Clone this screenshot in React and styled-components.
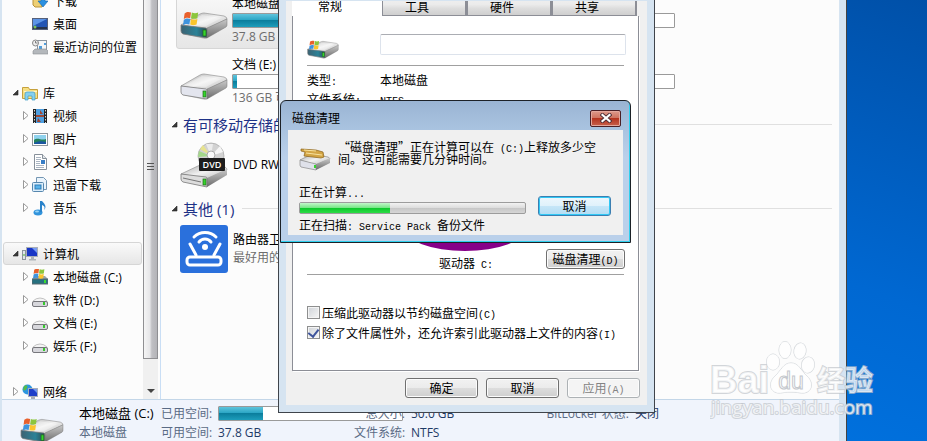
import styled, { createGlobalStyle, css } from "styled-components";

const shellFont = `"Open Sans", "Noto Sans CJK SC", sans-serif`;
const dialogFont = `"Noto Sans CJK SC", sans-serif`;

const Flag = props => (
  <g {...props}>
    <path d="M2 3c3-2 5-2 8-1L9 9C6 8 4 8 1 10z" fill="#e8602c" />
    <path d="M11 2c3 1 5 1 8 0l-1 7c-3 1-5 1-8 0z" fill="#8cc63c" />
    <path d="M1 11c3-2 5-2 8-1l-1 7c-3-1-5-1-8 1z" fill="#3f93dd" />
    <path d="M10 10c3 1 5 1 8 0l-1 7c-3 1-5 1-8 0z" fill="#fbc52c" />
  </g>
);

const DriveIcon = ({ width = 48, height = 34, system }) => (
  <svg width={width} height={height} viewBox="0 0 48 34" aria-hidden="true">
    <defs>
      <linearGradient id="driveTop" x1="0" y1="0" x2="1" y2="1">
        <stop offset="0" stopColor="#a9a9a9" />
        <stop offset="0.5" stopColor="#f1f1f1" />
        <stop offset="1" stopColor="#b5b5b5" />
      </linearGradient>
      <linearGradient id="driveSide" x1="0" y1="0" x2="0" y2="1">
        <stop offset="0" stopColor="#c9c9c9" />
        <stop offset="1" stopColor="#6c6c6c" />
      </linearGradient>
      <linearGradient id="driveFront" x1="0" y1="0" x2="1" y2="0">
        <stop offset="0" stopColor="#3d6272" />
        <stop offset="0.6" stopColor="#2b8297" />
        <stop offset="1" stopColor="#2c4a50" />
      </linearGradient>
    </defs>
    <path d="M3 28l22 5 22-14-2-2-22 12z" fill="#000" opacity="0.2" />
    <path d="M1 19L20 8q2-1 4-1l20 3q3 1 3 3L27 23z" fill="url(#driveTop)" stroke="#959595" strokeWidth="0.7" />
    <path d="M6 18L22 9l19 3-15 8z" fill="#fff" opacity="0.35" />
    <path d="M27 22l20-9v6q0 1-1 2L27 32z" fill="url(#driveSide)" stroke="#777" strokeWidth="0.5" />
    <path
      d="M1 19l25 3q1 0 1 2v8L3 28q-2-1-2-3z"
      fill={system ? "url(#driveFront)" : "#e3e5ee"}
      stroke="#7c7c7c"
      strokeWidth="0.8"
    />
    <rect x="23" y="24" width="3" height="6" fill="#35d52c" stroke="#226a1b" strokeWidth="0.7" />
    {system && <Flag transform="translate(3 5) scale(0.8)" />}
  </svg>
);

const DvdIcon = () => (
  <svg width="48" height="48" viewBox="0 0 48 48" aria-hidden="true">
    <circle cx="31" cy="15" r="13" fill="#d2d2d2" stroke="#a5a5a5" strokeWidth="0.7" />
    <path d="M31 15L19 10l-1 6z" fill="#a4d88a" />
    <path d="M31 15L20 8l3-4z" fill="#e7e38e" />
    <path d="M31 15L40 5l3 6z" fill="#f6f6f6" />
    <path d="M31 15L26 3h7z" fill="#ececec" />
    <circle cx="31" cy="14" r="4" fill="#fafafa" stroke="#aaa" />
    <path d="M1 33l19-9 25 2q2 1 2 3L27 38z" fill="url(#driveTop)" stroke="#959595" strokeWidth="0.7" />
    <path d="M27 37l20-9v6L27 46z" fill="url(#driveSide)" />
    <path d="M1 33l25 3q1 0 1 2v8L3 41q-2-1-2-3z" fill="#ddd" stroke="#777" strokeWidth="0.8" />
    <path d="M3 37l18 4" stroke="#777" />
    <rect x="23" y="38" width="3" height="6" fill="#35d52c" stroke="#226a1b" strokeWidth="0.7" />
    <rect x="19" y="17" width="26" height="13" rx="1" fill="#1d1d1d" />
    <text x="32" y="27" fontFamily="Open Sans" fontSize="9" fontWeight="600" fill="#fff" textAnchor="middle">
      DVD
    </text>
  </svg>
);

const RouterIcon = () => (
  <svg width="48" height="48" viewBox="0 0 48 48" aria-hidden="true">
    <rect width="48" height="48" rx="3" fill="#2a70dc" />
    <g fill="none" stroke="#fff" strokeWidth="3" strokeLinecap="round">
      <rect x="7" y="32" width="34" height="8" rx="3" />
      <path d="M10 19l6 11M40 19l-6 11" />
      <path d="M14 12c6-6 16-6 22 0M19 17c3-4 9-4 12 0" />
    </g>
    <circle cx="25" cy="22" r="3" fill="#fff" />
  </svg>
);

const CleanupIcon = () => (
  <svg width="32" height="24" viewBox="0 0 32 24" aria-hidden="true">
    <path d="M1 13l12-6 16 3q2 1 2 2L17 18z" fill="url(#driveTop)" stroke="#8a8a8a" strokeWidth="0.7" />
    <path d="M17 17l14-6v5L17 23z" fill="url(#driveSide)" />
    <path d="M1 13l16 4v6L2 20q-1-1-1-2z" fill="#dfe1ea" stroke="#888" strokeWidth="0.7" />
    <rect x="15" y="18" width="2" height="3" fill="#35d52c" />
    <path d="M2 2l15 1 7 2 1 5-3 1-17-2 1-4-4-1z" fill="#d3a544" stroke="#8a6118" strokeWidth="0.7" />
    <path d="M7 6l16 2M5 3l12 1" stroke="#f8e3a0" />
  </svg>
);

const smallIcons = {
  download: (
    <>
      <path d="M1 0h9v14H3l-2-2z" fill="#edcf74" stroke="#b8923a" />
      <path d="M9 3h4v5h3l-5 6-5-6h3z" fill="#2b90e0" stroke="#1666ad" strokeWidth="0.6" />
    </>
  ),
  desktop: (
    <>
      <rect x="0.5" y="2.5" width="15" height="11" fill="#2355b4" stroke="#56617a" />
      <path d="M1 3h14L1 10z" fill="#5c94e6" />
      <path d="M1 11h14v2H1z" fill="#27344c" />
      <circle cx="3" cy="11" r="1.5" fill="#7ac25a" />
    </>
  ),
  recent: (
    <>
      <rect x="5.5" y="1.5" width="9" height="10" fill="#f4f6f8" stroke="#8a949e" />
      <path d="M7 7h3v3H7zM12 4h2v2h-2z" fill="#4f9ddb" />
      <path d="M1 12l2-2h11l2 2v3H1z" fill="#b4b8bc" stroke="#898d92" strokeWidth="0.6" />
      <circle cx="3.5" cy="4" r="3" fill="#eee" stroke="#888" />
      <path d="M3.5 2v2h2" fill="none" stroke="#555" strokeWidth="0.7" />
    </>
  ),
  library: (
    <>
      <path d="M0.5 2.5h6l1 2h8v9H0.5z" fill="#f6df83" stroke="#c6a13c" />
      <path d="M2 6h13v1H2z" fill="#fff5c4" />
      <path d="M3 15V9q0-2 2-2h6q2 0 2 2v6h-3v-4H6v4z" fill="#85d0ef" stroke="#3f9dc5" strokeWidth="0.7" />
    </>
  ),
  video: (
    <>
      <rect x="1" y="1" width="14" height="14" fill="#232323" />
      <rect x="4" y="1" width="8" height="14" fill="#4e9fe0" />
      <path d="M4 7h8v2H4zM8 2l3 4H8zM6 10l3 4H5z" fill="#9e4632" />
      <path d="M2.5 2v13M13.5 2v13" stroke="#d6d6d6" strokeDasharray="1.5 1.5" />
    </>
  ),
  picture: (
    <>
      <rect x="0.5" y="2.5" width="15" height="12" fill="#fff" stroke="#8e969d" />
      <rect x="2" y="4" width="12" height="9" fill="#8fd2ee" />
      <path d="M2 9c4-3 7 1 12-1v5H2z" fill="#25815c" />
      <path d="M2 12c4-2 8-2 12-1v2H2z" fill="#1b56a0" />
    </>
  ),
  document: (
    <>
      <path d="M2.5 0.5h8l4 4v11h-12z" fill="#fff" stroke="#87909a" />
      <path d="M10.5 0.5v4h4" fill="#e2e6ea" stroke="#87909a" />
      <path d="M4 3.5h5M4 5.5h5M4 7.5h4M4 9.5h4M4 11.5h8M4 13.5h8" stroke="#aab5c2" />
      <path d="M9 6h4v4H9z" fill="#387ec6" />
    </>
  ),
  files: (
    <>
      <path d="M4.5 0.5h7l3 3v9h-10z" fill="#eaf4fc" stroke="#7496b3" />
      <rect x="0.5" y="5.5" width="11" height="9" rx="1" fill="#dceefb" stroke="#5687ae" />
      <rect x="3" y="8" width="6" height="4" fill="#58b3ea" stroke="#2e7cb7" />
    </>
  ),
  music: (
    <>
      <ellipse cx="6" cy="12.500" rx="4.500" ry="3" fill="#3294dc" />
      <path d="M8 1v11h2V5c3 1 3 3 2 5 3-3 1-6-2-9z" fill="#2a83ca" />
      <ellipse cx="5" cy="11.500" rx="2" ry="1" fill="#96d2f6" />
    </>
  ),
  computer: (
    <>
      <rect x="0.5" y="4.5" width="3" height="9" fill="#dfe5ea" stroke="#8c949b" />
      <path d="M1 9h2" stroke="#4ab52d" />
      <rect x="4.5" y="1.5" width="11" height="9" fill="#1936c6" stroke="#a8aeb8" />
      <path d="M10 2h5v5z" fill="#779bf3" />
      <path d="M9 11h3v2h2v1.5H7V13h2z" fill="#aeb4ba" />
    </>
  ),
  system: (
    <>
      <path d="M0 10l3-3h10l3 3v5H0z" fill="#9ca6aa" />
      <path d="M0 10h16v5H0z" fill="#27717f" stroke="#5b6b70" />
      <rect x="12" y="11" width="2" height="3" fill="#3bdc31" />
      <Flag transform="translate(1 -1) scale(0.6)" />
    </>
  ),
  drive: (
    <>
      <path d="M1 9q3-3 7-3t7 3v3H1z" fill="#f4f4f4" stroke="#aaa" strokeWidth="0.7" />
      <rect x="0.5" y="9.5" width="15" height="5" rx="1.500" fill="#d7d7dc" stroke="#77777c" />
      <rect x="11" y="10" width="2" height="3" fill="#35c92c" />
    </>
  ),
  network: (
    <>
      <circle cx="5.500" cy="5.500" r="5" fill="#2d95e0" />
      <path d="M2 2c3-2 4 0 3 2s-2 3-4 2zM6 6l4 1-3 3z" fill="#56bc4c" />
      <rect x="6.5" y="4.5" width="9" height="8" fill="#1d3fc9" stroke="#a6aeb9" />
      <path d="M11 5h4v4z" fill="#6f98ef" />
      <path d="M9 13h4v2H9z" fill="#a6aeb9" />
    </>
  ),
};

const SmallIcon = ({ name }) => (
  <svg width="16" height="16" viewBox="0 0 16 16" aria-hidden="true">
    {smallIcons[name]}
  </svg>
);

const Twisty = ({ open }) => (
  <svg width="7" height="9" viewBox="0 0 7 9" aria-hidden="true">
    {open ? (
      <path d="M6 2v5H1z" fill="#3a3a3a" stroke="#222" strokeWidth="0.6" />
    ) : (
      <path d="M1.5 0.5v8l4.500-4z" fill="#fff" stroke="#999" />
    )}
  </svg>
);

const tree = [
  [
    { label: "下载", icon: "download", leaf: true },
    { label: "桌面", icon: "desktop", leaf: true },
    { label: "最近访问的位置", icon: "recent", leaf: true },
  ],
  [
    { label: "库", icon: "library", root: true, open: true },
    { label: "视频", icon: "video" },
    { label: "图片", icon: "picture" },
    { label: "文档", icon: "document" },
    { label: "迅雷下载", icon: "files" },
    { label: "音乐", icon: "music" },
  ],
  [
    { label: "计算机", icon: "computer", root: true, open: true, selected: true },
    { label: "本地磁盘 (C:)", icon: "system" },
    { label: "软件 (D:)", icon: "drive" },
    { label: "文档 (E:)", icon: "drive" },
    { label: "娱乐 (F:)", icon: "drive" },
  ],
  [{ label: "网络", icon: "network", root: true }],
];

const drives = [
  { name: "本地磁盘 (C:)", free: "37.8 GB 可用,共 50.0 GB", used: 25, system: true, selected: true },
  { name: "软件 (D:)", free: "120 GB 可用,共 138 GB", used: 13 },
  { name: "文档 (E:)", free: "136 GB 可用,共 138 GB", used: 2 },
  { name: "娱乐 (F:)", free: "130 GB 可用,共 138 GB", used: 6 },
];

const Sidebar = () => (
  <StyledSidebar>
    <StyledTree>
      {tree.map((group, i) => (
        <StyledTreeGroup key={i}>
          {group.map(item => (
            <StyledTreeItem key={item.label} href="#" $root={item.root} $selected={item.selected}>
              <StyledTwisty>{!item.leaf && <Twisty open={item.open} />}</StyledTwisty>
              <SmallIcon name={item.icon} />
              <span>{item.label}</span>
            </StyledTreeItem>
          ))}
        </StyledTreeGroup>
      ))}
    </StyledTree>
    <StyledScrollbar>
      <StyledThumb>
        <i />
        <i />
        <i />
      </StyledThumb>
      <StyledScrollDown aria-label="向下滚动">
        <svg width="8" height="4" viewBox="0 0 8 4">
          <path d="M0 0h8L4 4z" fill="#444" />
        </svg>
      </StyledScrollDown>
    </StyledScrollbar>
  </StyledSidebar>
);

const SectionHeader = ({ children }) => (
  <StyledSectionHeader>
    <Twisty open />
    <span>{children}</span>
  </StyledSectionHeader>
);

const Explorer = () => (
  <StyledExplorer>
    <StyledBody>
      <Sidebar />
      <StyledContent>
        <StyledDriveGrid>
          {drives.map(drive => (
            <StyledTile key={drive.name} href="#" $selected={drive.selected}>
              <DriveIcon system={drive.system} />
              <StyledTileText>
                <span>{drive.name}</span>
                <StyledUsage>
                  <StyledUsageFill style={{ width: `${drive.used}%` }} />
                </StyledUsage>
                <small>{drive.free}</small>
              </StyledTileText>
            </StyledTile>
          ))}
        </StyledDriveGrid>
        <SectionHeader>有可移动存储的设备 (1)</SectionHeader>
        <StyledTile href="#">
          <DvdIcon />
          <StyledTileText>DVD RW 驱动器</StyledTileText>
        </StyledTile>
        <SectionHeader>其他 (1)</SectionHeader>
        <StyledTile href="#">
          <RouterIcon />
          <StyledTileText>
            <span>路由器卫士</span>
            <small>最好用的路由器管理软件</small>
          </StyledTileText>
        </StyledTile>
      </StyledContent>
    </StyledBody>
    <StyledDetails>
      <StyledDetailsIcon>
        <DriveIcon width={44} height={31} system />
      </StyledDetailsIcon>
      <StyledDetailsName>
        <strong>本地磁盘 (C:)</strong>
        <span>本地磁盘</span>
      </StyledDetailsName>
      <StyledFacts $width={190} $label={51}>
        <dt>已用空间:</dt>
        <dd>
          <StyledUsage>
            <StyledUsageFill style={{ width: "24%" }} />
          </StyledUsage>
        </dd>
        <dt>可用空间:</dt>
        <dd>37.8 GB</dd>
      </StyledFacts>
      <StyledFacts $width={182} $label={51}>
        <dt>总大小:</dt>
        <dd>50.0 GB</dd>
        <dt>文件系统:</dt>
        <dd>NTFS</dd>
      </StyledFacts>
      <StyledFacts $width={140} $label={90}>
        <dt>BitLocker 状态:</dt>
        <dd>关闭</dd>
      </StyledFacts>
    </StyledDetails>
  </StyledExplorer>
);

const Properties = () => (
  <StyledProperties>
    <StyledTabs role="tablist">
      {["常规", "工具", "硬件", "共享"].map((tab, i) => (
        <StyledTab key={tab} role="tab" aria-selected={i === 0} $active={i === 0}>
          {tab}
        </StyledTab>
      ))}
    </StyledTabs>
    <StyledPanel>
      <StyledNameRow>
        <DriveIcon width={32} height={24} system />
        <StyledNameInput aria-label="卷标" />
      </StyledNameRow>
      <StyledInfo>
        <dt>类型<Latin>:</Latin></dt>
        <dd>本地磁盘</dd>
        <dt>文件系统<Latin>:</Latin></dt>
        <dd><Latin>NTFS</Latin></dd>
      </StyledInfo>
      <StyledChart>
        <svg width="124" height="43" viewBox="0 0 124 43" aria-hidden="true">
          <ellipse cx="61" cy="22" rx="61" ry="23" fill="#870088" />
        </svg>
        <StyledChartRow>
          <span>驱动器<Latin> C:</Latin></span>
          <StyledButton $wide>磁盘清理<Latin>(D)</Latin></StyledButton>
        </StyledChartRow>
      </StyledChart>
      <StyledOptions>
        <StyledCheck>
          <input type="checkbox" />
          <span>压缩此驱动器以节约磁盘空间<Latin>(C)</Latin></span>
        </StyledCheck>
        <StyledCheck>
          <input type="checkbox" defaultChecked />
          <span>除了文件属性外，还允许索引此驱动器上文件的内容<Latin>(I)</Latin></span>
        </StyledCheck>
      </StyledOptions>
    </StyledPanel>
    <StyledFooter>
      <StyledButton>确定</StyledButton>
      <StyledButton>取消</StyledButton>
      <StyledButton disabled>应用<Latin>(A)</Latin></StyledButton>
    </StyledFooter>
  </StyledProperties>
);

const Cleanup = () => (
  <StyledCleanup role="dialog" aria-labelledby="cleanup-title">
    <StyledTitleBar>
      <span id="cleanup-title">磁盘清理</span>
      <StyledClose aria-label="关闭">
        <svg width="12" height="10" viewBox="0 0 12 10">
          <path d="M2.5 2l7 6M9.5 2l-7 6" stroke="#503038" strokeWidth="4" strokeLinecap="square" />
          <path d="M2.5 2l7 6M9.5 2l-7 6" stroke="#fff" strokeWidth="2.200" strokeLinecap="square" />
        </svg>
      </StyledClose>
    </StyledTitleBar>
    <StyledCleanupBody>
      <StyledMessage>
        <CleanupIcon />
        <p>
          “磁盘清理”正在计算可以在<Latin> (C:)</Latin>上释放多少空
          <br />
          间。这可能需要几分钟时间。
        </p>
      </StyledMessage>
      <StyledStatus>正在计算<Latin>...</Latin></StyledStatus>
      <StyledProgressRow>
        <StyledProgress role="progressbar" aria-valuenow={40}>
          <StyledProgressFill style={{ width: "40%" }} />
        </StyledProgress>
        <StyledButton $focused>取消</StyledButton>
      </StyledProgressRow>
      <StyledStatus>正在扫描<Latin>: Service Pack </Latin>备份文件</StyledStatus>
    </StyledCleanupBody>
  </StyledCleanup>
);

const Watermark = () => (
  <StyledWatermark width="170" height="82" viewBox="0 0 170 82" aria-hidden="true">
    <g fill="#fff" fillOpacity="0.72" stroke="#bfc4ca" strokeOpacity="0.7" paintOrder="stroke">
      <text x="0" y="52" fontFamily="Liberation Sans" fontWeight="700" fontSize="38" strokeWidth="2">
        Bai
      </text>
      <ellipse cx="63" cy="21" rx="6.500" ry="8" />
      <ellipse cx="75" cy="9" rx="6" ry="8.500" />
      <ellipse cx="90" cy="10" rx="6" ry="8" transform="rotate(10 90 10)" />
      <ellipse cx="98" cy="24" rx="6.500" ry="8" transform="rotate(10 98 24)" />
      <path d="M81 22c8 0 10 8 16 13 8 8 4 17-4 17-5 0-6-1-12-1s-8 1-12 1c-8 0-12-9-4-17 6-5 8-13 16-13z" />
      <text x="107" y="50" fontFamily="Noto Sans CJK SC" fontWeight="700" fontSize="28" strokeWidth="2">
        经验
      </text>
      <text x="1" y="73" fontFamily="Open Sans" fontSize="19" strokeWidth="2">
        jingyan.baidu.com
      </text>
    </g>
    <text
      x="81"
      y="48"
      fontFamily="Liberation Sans"
      fontSize="23"
      textAnchor="middle"
      fill="#fff"
      stroke="#c4c8cd"
      strokeWidth="1"
    >
      du
    </text>
  </StyledWatermark>
);

const App = () => (
  <>
    <GlobalStyle />
    <StyledDesktop>
      <Explorer />
      <Properties />
      <Cleanup />
      <Watermark />
    </StyledDesktop>
  </>
);

export default App;

const GlobalStyle = createGlobalStyle`
  * {
    box-sizing: border-box;
  }

  body {
    margin: 0;
    font-family: ${shellFont};
    font-size: 12px;
    color: #000;
  }

  button, input {
    font: inherit;
    color: inherit;
    margin: 0;
  }

  a {
    color: inherit;
    text-decoration: none;
  }

  dl, dd, p {
    margin: 0;
  }

  svg {
    flex: none;
    display: block;
  }
`;

const Latin = styled.span`
  font-family: "Liberation Mono", monospace;
  font-size: 10px;
  line-height: 0;
  white-space: pre;
`;

const StyledDesktop = styled.main`
  position: relative;
  height: 100vh;
  padding-right: 80px;
  overflow: hidden;
  background: linear-gradient(200deg, #0050a8 0%, #0068d2 40%, #0074e2 70%, #0069d4 100%);
`;

const StyledExplorer = styled.section`
  height: 100%;
  display: flex;
  flex-direction: column;
  border: solid #d6e4f1;
  border-width: 0 7px 0 2px;
  box-shadow: 1px 0 0 #444;
  margin-right: 1px;
`;

const StyledBody = styled.div`
  flex: 1;
  min-height: 0;
  display: flex;
  background: #fcfcfc;
`;

const StyledSidebar = styled.nav`
  display: flex;
  flex: none;
  width: 159px;
  padding-right: 2px;
  border-right: 1px solid #c9def5;
`;

const StyledTree = styled.div`
  flex: 1;
  display: flex;
  flex-direction: column;
  gap: 23px;
  margin-top: -11px;
  overflow: hidden;
`;

const StyledTreeGroup = styled.div`
  display: flex;
  flex-direction: column;
`;

const StyledTreeItem = styled.a`
  display: flex;
  align-items: center;
  height: 23px;
  margin: 0 1px;
  padding-left: ${({ $root }) => ($root ? 8 : 18)}px;
  border: 1px solid transparent;
  border-radius: 3px;
  white-space: nowrap;

  & > svg {
    margin-right: 5px;
  }

  ${({ $selected }) =>
    $selected &&
    css`
      border-color: #d6d6d6;
      background: linear-gradient(#fafafa, #e6e6e6);
    `}
`;

const StyledTwisty = styled.span`
  width: 10px;
`;

const StyledScrollbar = styled.div`
  width: 15px;
  display: flex;
  flex-direction: column;
  background: #f0f0f0;
`;

const StyledThumb = styled.div`
  flex: 1;
  display: flex;
  flex-direction: column;
  align-items: center;
  gap: 2px;
  padding-top: 163px;
  border: 1px solid #8f8f92;
  border-top: 0;
  background: linear-gradient(90deg, #f5f5f5, #e6e6e8 45%, #c0c0c4 60%, #b4b4b8);

  & i {
    width: 7px;
    height: 1px;
    background: #555;
  }
`;

const StyledScrollDown = styled.button`
  height: 40px;
  padding: 24px 0 0;
  display: flex;
  align-items: center;
  justify-content: center;
  border: 0;
  background: none;
`;

const StyledContent = styled.div`
  flex: 1;
  min-width: 0;
  overflow: hidden;
  padding: 0 7px 0 10px;
`;

const StyledTile = styled.a`
  display: flex;
  align-items: center;
  gap: 5px;
  min-height: 58px;
  margin-left: 5px;
  padding-left: 3px;
  border: 1px solid transparent;
  border-radius: 3px;

  ${({ $selected }) =>
    $selected &&
    css`
      border-color: #d6d6d6;
      background: linear-gradient(#fafafa, #e6e6e6);
    `}
`;

const StyledDriveGrid = styled.div`
  display: grid;
  grid-template-columns: 254px 254px;
  grid-auto-rows: 60px;
  gap: 1px 4px;
  margin-top: -11px;

  & ${StyledTile} {
    gap: 4px;
    padding-top: 2px;
  }

  & svg {
    margin-top: 6px;
  }
`;

const StyledTileText = styled.span`
  display: flex;
  flex-direction: column;
  line-height: 18px;
  white-space: nowrap;

  & small {
    font-size: 12px;
    color: #6d6d6d;
  }
`;

const StyledUsage = styled.span`
  display: block;
  width: 185px;
  max-width: 100%;
  height: 15px;
  border: 1px solid #9a9a9a;
  border-radius: 1px;
  background: #fff;
`;

const StyledUsageFill = styled.span`
  display: block;
  height: 100%;
  background: linear-gradient(#5fc4dc, #2ba6c5 45%, #0b7e9d 50%, #1d9dbb);
`;

const StyledSectionHeader = styled.h2`
  display: flex;
  align-items: center;
  gap: 5px;
  height: 24px;
  margin: 2px 0 0;
  font-size: 15px;
  font-weight: 400;
  color: #1e3287;
  white-space: nowrap;

  &::after {
    content: "";
    flex: 1;
    height: 1px;
    margin-left: 3px;
    background: #e0e0e0;
  }
`;

const StyledDetails = styled.footer`
  display: flex;
  height: 42px;
  padding: 4px 0 0 18px;
  overflow: hidden;
  border-top: 1px solid #c3d6e8;
  background: #f0f4fc;
  line-height: 19px;
  color: #5a6b85;
  white-space: nowrap;
`;

const StyledDetailsIcon = styled.div`
  width: 59px;
  padding-top: 9px;
`;

const StyledDetailsName = styled.div`
  width: 82px;
  display: flex;
  flex-direction: column;

  & strong {
    font-size: 13px;
    font-weight: 400;
    color: #000;
  }
`;

const StyledFacts = styled.dl`
  display: grid;
  grid-template-columns: ${({ $label }) => $label}px 1fr;
  grid-auto-rows: 19px;
  align-items: center;
  column-gap: 6px;
  width: ${({ $width }) => $width}px;
  margin-right: 3px;

  & dt {
    text-align: right;
  }

  & dd {
    color: #1e3a66;
  }
`;

const StyledProperties = styled.section`
  position: absolute;
  left: 278px;
  bottom: 28px;
  width: 377px;
  height: 420px;
  border: 1px solid #3f444b;
  outline: 7px solid #d6e4f1;
  outline-offset: -8px;
  background: #f0f0f0;
  display: flex;
  flex-direction: column;
  padding: 0 15px 14px 13px;
  font-family: ${dialogFont};
`;

const StyledTabs = styled.div`
  display: flex;
  height: 22px;
`;

const StyledTab = styled.button`
  width: 85px;
  padding: 4px 14px 0 0;
  line-height: 18px;
  border: solid #8c8e96;
  border-width: 0 2px 1px 1px;
  background: linear-gradient(#f2f2f2, #ebebeb 50%, #dcdcdc 70%, #cfcfcf);

  ${({ $active }) =>
    $active &&
    css`
      width: 90px;
      padding-top: 2px;
      border: 0;
      background: #fff;
    `}
`;

const StyledPanel = styled.div`
  flex: 1;
  display: flex;
  flex-direction: column;
  padding: 0 14px;
  border: 1px solid #8c8e96;
  border-top: 0;
  box-shadow: 1px 1px 0 #fff;
  background: #fff;
`;

const StyledNameRow = styled.div`
  display: flex;
  align-items: center;
  gap: 41px;
  height: 50px;
  padding-top: 8px;
  border-bottom: 1px solid #a0a0a0;

  & svg {
    margin-top: 6px;
  }
`;

const StyledNameInput = styled.input`
  flex: 1;
  min-width: 0;
  height: 21px;
  margin-right: -2px;
  border: 1px solid #dde3ec;
  border-top-color: #abadb3;
  border-radius: 2px;
`;

const StyledInfo = styled.dl`
  display: grid;
  grid-template-columns: 73px 1fr;
  grid-auto-rows: 19px;
  align-items: center;
  padding-top: 4px;
  line-height: 18px;
`;

const StyledChart = styled.div`
  flex: 1;
  display: flex;
  flex-direction: column;
  justify-content: flex-end;
  align-items: center;
  border-bottom: 1px solid #a0a0a0;

  & svg {
    overflow: visible;
  }
`;

const StyledChartRow = styled.div`
  display: grid;
  grid-template-columns: 1fr 80px;
  align-items: start;
  width: 100%;
  height: 25px;
  padding-left: 132px;
  line-height: 27px;

  & button {
    margin-left: 2px;
  }
`;

const StyledButton = styled.button`
  width: ${({ $wide }) => ($wide ? 79 : 73)}px;
  height: 20px;
  padding: 0;
  line-height: 18px;
  border: 1px solid #707070;
  border-radius: 3px;
  box-shadow: inset 0 0 0 1px #fcfcfc;
  background: linear-gradient(#f2f2f2, #ebebeb 50%, #dddddd 50%, #cfcfcf);

  &:disabled {
    border-color: #adb2b5;
    background: #f4f4f4;
    color: #838383;
  }

  ${({ $focused }) =>
    $focused &&
    css`
      border-color: #3c7fb1;
      box-shadow: inset 0 0 0 1px #30c8f5;
      background: linear-gradient(#edf7fd, #dff1fb 50%, #c6e6f8 50%, #b2dcf3);
    `}
`;

const StyledOptions = styled.div`
  height: 95px;
  padding-top: 27px;
`;

const StyledCheck = styled.label`
  display: flex;
  align-items: center;
  gap: 2px;
  height: 20px;
  white-space: nowrap;

  & input {
    appearance: none;
    flex: none;
    display: grid;
    place-items: center;
    width: 13px;
    height: 13px;
    border: 1px solid #8e8f8f;
    box-shadow: inset 0 0 0 1px #f4f4f4;
    background: linear-gradient(135deg, #cfd3d8, #f6f6f6);
  }

  & input:checked::before {
    content: "";
    width: 5px;
    height: 8px;
    margin-bottom: 2px;
    border: solid #3e549c;
    border-width: 0 2px 2px 0;
    transform: rotate(38deg);
  }
`;

const StyledFooter = styled.div`
  display: flex;
  justify-content: flex-end;
  gap: 8px;
  padding-top: 7px;
  margin-right: -1px;
`;

const StyledCleanup = styled.section`
  position: absolute;
  left: 280px;
  top: 100px;
  width: 351px;
  padding: 1px 7px 7px;
  border: 1px solid #1c2127;
  border-radius: 6px 6px 0 0;
  box-shadow: inset -1px -1px 0 #2fd0ee;
  background: linear-gradient(#9ab4d3, #a9c3e0 20%, #bad0ea 40%, #bad0ea);
  font-family: ${dialogFont};
`;

const StyledTitleBar = styled.header`
  display: flex;
  align-items: center;
  justify-content: space-between;
  height: 28px;
  padding: 4px 2px 0 4px;
  line-height: 16px;
`;

const StyledClose = styled.button`
  width: 31px;
  height: 17px;
  padding: 0;
  display: grid;
  place-items: center;
  border: 1px solid #4a1f25;
  border-radius: 2px;
  box-shadow: inset 0 0 0 1px #e3a79c;
  background: linear-gradient(#dd9a8c, #cf7461 45%, #b4341f 50%, #c8604b);
`;

const StyledCleanupBody = styled.div`
  height: 105px;
  padding: 9px 11px 0;
  background: #f0f0f0;
`;

const StyledMessage = styled.div`
  display: flex;
  gap: 7px;
  height: 43px;
  white-space: nowrap;

  & svg {
    margin-top: 8px;
  }

  & p {
    line-height: 12px;
    padding-top: 2px;
  }
`;

const StyledStatus = styled.div`
  height: 16px;
  line-height: 20px;
  white-space: nowrap;
`;

const StyledProgressRow = styled.div`
  display: flex;
  align-items: center;
  gap: 12px;
  height: 17px;
  padding-top: 2px;

  & button {
    margin-bottom: 4px;
  }
`;

const StyledProgress = styled.div`
  width: 227px;
  height: 12px;
  border: 1px solid #9c9c9c;
  border-radius: 2px;
  background: linear-gradient(#f2f2f2, #dedede 45%, #c6c6c6 50%, #d6d6d6);
`;

const StyledProgressFill = styled.div`
  height: 100%;
  background: linear-gradient(#c3f7cb, #7be78a 45%, #0cc72b 50%, #2cdc46);
`;

const StyledWatermark = styled.svg`
  position: absolute;
  right: 47px;
  bottom: 18px;
`;
